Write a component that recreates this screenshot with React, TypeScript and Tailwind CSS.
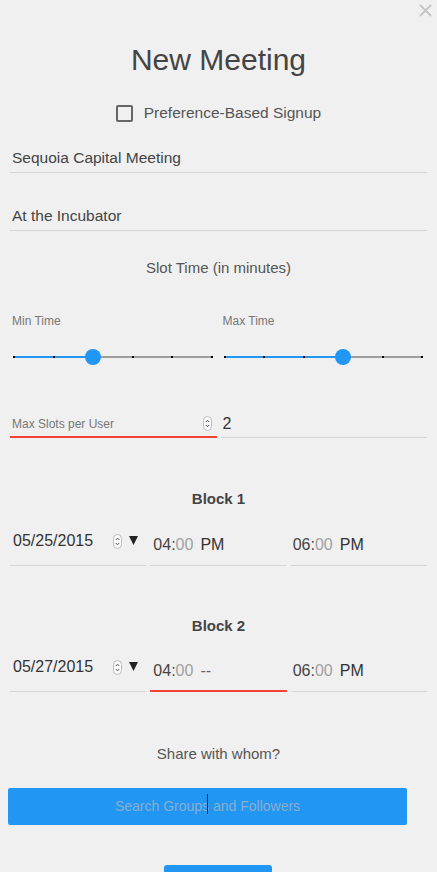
import React from "react";

function Spinner({ className = "" }: { className?: string }) {
  return (
    <svg width="9" height="15" viewBox="0 0 9 15" className={className}>
      <rect x="0.5" y="0.5" width="8" height="14" rx="4" fill="#fafafa" stroke="#bdbdbd" />
      <path d="M2.8 6 L4.5 4.2 L6.2 6" fill="none" stroke="#555" strokeWidth="1" />
      <path d="M2.8 9 L4.5 10.8 L6.2 9" fill="none" stroke="#555" strokeWidth="1" />
    </svg>
  );
}

function Slider({ value }: { value: number }) {
  const ticks = [0, 0.2, 0.4, 0.6, 0.8, 1];
  return (
    <div className="relative h-[20px] ml-[4px] mr-[5px]">
      <div className="absolute left-0 right-0 top-[9px] h-[2px] bg-[#9e9e9e]" />
      <div className="absolute left-0 top-[9px] h-[2px] bg-[#2196f3]" style={{ width: `${value * 100}%` }} />
      {ticks.map((t) => (
        <div
          key={t}
          className="absolute top-[9px] h-[2px] w-[2px] -ml-[1px] bg-black"
          style={{ left: `${t * 100}%` }}
        />
      ))}
      <div
        className="absolute top-[2px] h-[16px] w-[16px] -ml-[8px] rounded-full bg-[#2196f3]"
        style={{ left: `${value * 100}%` }}
      />
    </div>
  );
}

function DateField({ date }: { date: string }) {
  return (
    <div className="h-[38px] border-b border-[#d6d6d6] pl-[3px] pt-[1px] flex items-start">
      <span className="text-[16px] leading-[24px] text-[#333] w-[100px]">{date}</span>
      <Spinner className="mt-[5px]" />
      <svg width="9" height="9" viewBox="0 0 9 9" className="ml-[7px] mt-[7px]">
        <polygon points="0,0 9,0 4.5,9" fill="#222" />
      </svg>
    </div>
  );
}

function TimeField({ hour, period, error = false, pl = "pl-[3px]" }: { hour: string; period: string; error?: boolean; pl?: string }) {
  return (
    <div
      className={
        "h-[38px] pt-[5px] " +
        pl +
        " " +
        (error ? "border-b-2 border-[#f44336]" : "border-b border-[#d6d6d6]")
      }
    >
      <span className="text-[16px] leading-[24px] text-[#444]">
        {hour}:<span className="text-[#a0a0a0]">00</span>
        <span className={"ml-[7px] " + (period === "--" ? "text-[#666]" : "text-[#333]")}>{period}</span>
      </span>
    </div>
  );
}

export default function App() {
  return (
    <div className="h-[872px] w-[437px] overflow-hidden bg-[#f0f0f0] font-['Liberation_Sans',Arial,sans-serif]">
      {/* close */}
      <div className="h-[42px] flex justify-end pt-[4px] pr-[5px]">
        <svg width="13" height="13" viewBox="0 0 13 13">
          <path d="M1 1 L12 12 M12 1 L1 12" stroke="#c4c4c4" strokeWidth="1.8" />
        </svg>
      </div>

      <h1 className="text-center text-[30px] leading-[36px] text-[#444]">New Meeting</h1>

      <div className="mt-[23px] h-[24px] flex items-center justify-center">
        <div className="h-[17px] w-[17px] border-2 border-[#666] rounded-[2px]" />
        <span className="ml-[11px] text-[15.5px] leading-[24px] text-[#555]">Preference-Based Signup</span>
      </div>

      <div className="mt-[15px] mx-[10px] pt-[6px] h-[33px] border-b border-[#d6d6d6] pl-[2px]">
        <div className="text-[15.5px] leading-[24px] text-[#444]">Sequoia Capital Meeting</div>
      </div>

      <div className="mt-[25px] mx-[10px] pt-[6px] h-[33px] border-b border-[#d6d6d6] pl-[2px]">
        <div className="text-[15.5px] leading-[24px] text-[#444]">At the Incubator</div>
      </div>

      <div className="mt-[27px] text-center text-[15px] leading-[20px] text-[#555]">Slot Time (in minutes)</div>

      <div className="mt-[35px] mx-[10px] grid grid-cols-2 gap-x-[4px]">
        <div>
          <div className="pl-[2px] text-[12px] leading-[16px] text-[#777]">Min Time</div>
          <div className="mt-[18px]">
            <Slider value={0.4} />
          </div>
        </div>
        <div>
          <div className="pl-[2px] text-[12px] leading-[16px] text-[#777]">Max Time</div>
          <div className="mt-[18px]">
            <Slider value={0.6} />
          </div>
        </div>
      </div>

      <div className="mt-[43px] mx-[10px] grid grid-cols-2 gap-x-[4px]">
        <div className="h-[28px] border-b-2 border-[#f44336] pt-[6px] pl-[2px] pr-[5px] flex items-start justify-between">
          <span className="text-[12px] leading-[16px] text-[#777]">Max Slots per User</span>
          <Spinner />
        </div>
        <div className="h-[28px] border-b border-[#d6d6d6] pt-[2px] pl-[2px]">
          <span className="text-[16px] leading-[24px] text-[#333]">2</span>
        </div>
      </div>

      <div className="mt-[51px] text-center text-[15px] leading-[20px] font-bold text-[#444]">Block 1</div>

      <div className="mt-[19px] mx-[10px] grid grid-cols-3 gap-x-[4px]">
        <DateField date="05/25/2015" />
        <TimeField hour="04" period="PM" />
        <TimeField hour="06" period="PM" pl="pl-[2px]" />
      </div>

      <div className="mt-[50px] text-center text-[15px] leading-[20px] font-bold text-[#444]">Block 2</div>

      <div className="mt-[18px] mx-[10px] grid grid-cols-3 gap-x-[4px]">
        <DateField date="05/27/2015" />
        <TimeField hour="04" period="--" error />
        <TimeField hour="06" period="PM" pl="pl-[2px]" />
      </div>

      <div className="mt-[52px] text-center text-[15px] leading-[20px] text-[#555]">Share with whom?</div>

      <div className="mt-[24px] ml-[8px] w-[399px] h-[37px] rounded-[2px] bg-[#2196f3] flex items-center justify-center">
        <span className="relative text-[14px] text-[#8aaed0]">
          Search Groups and Followers
          <span className="absolute left-[92px] top-[-2px] h-[20px] w-[1px] bg-[#1a2a3a]" />
        </span>
      </div>

      <div className="mt-[40px] ml-[164px] w-[108px] h-[36px] rounded-t-[3px] bg-[#2196f3]" />
    </div>
  );
}
